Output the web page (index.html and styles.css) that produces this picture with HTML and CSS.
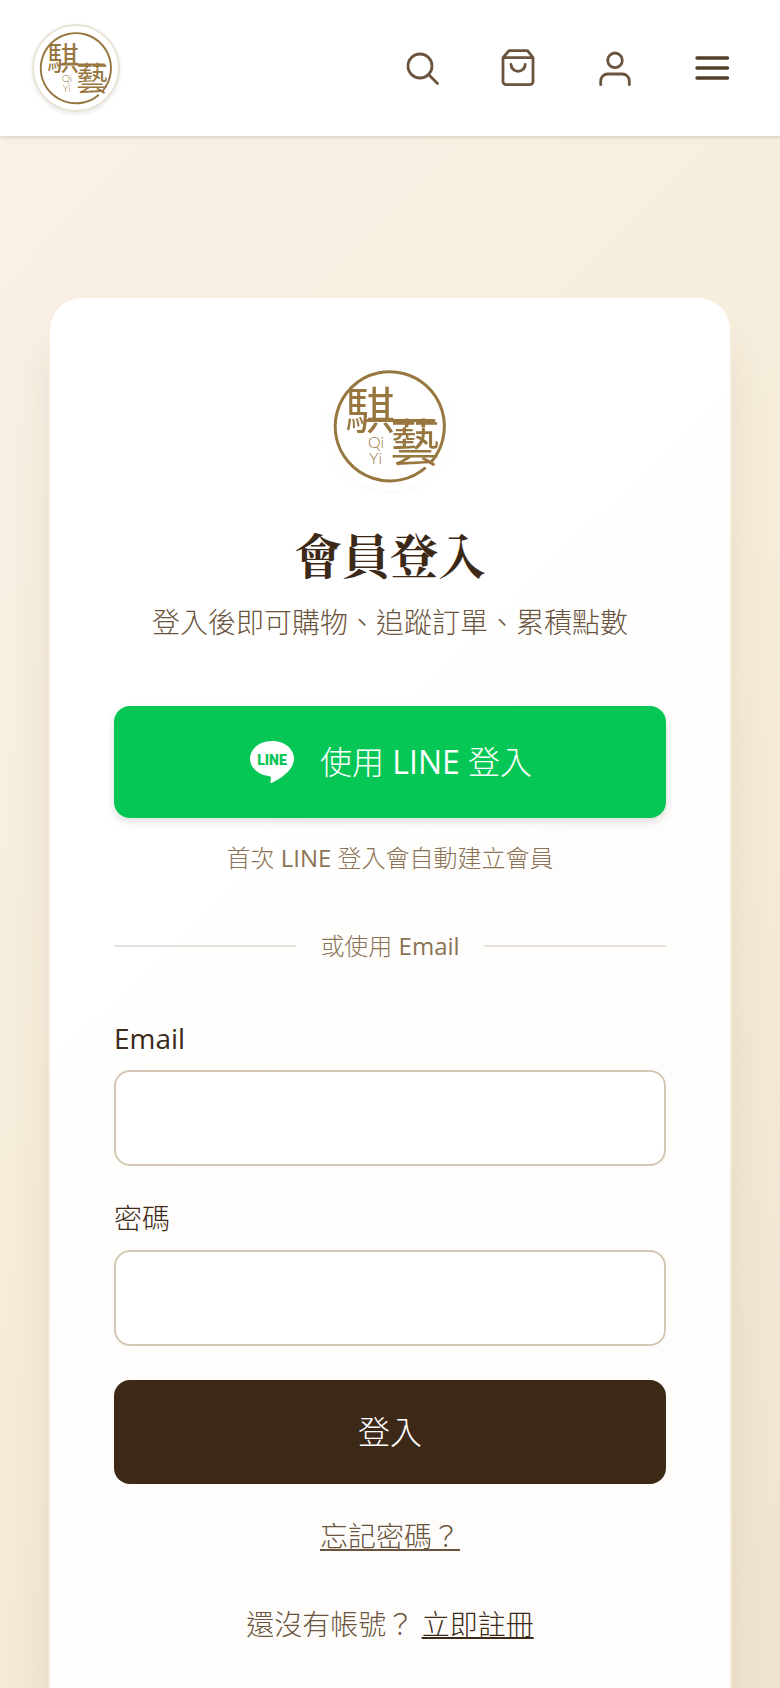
FILE: index.html
```html
<!doctype html>
<html lang="zh-Hant">
<head>
  <meta charset="utf-8">
  <meta name="viewport" content="width=device-width, initial-scale=1">
  <title>會員登入</title>
  <link rel="stylesheet" href="styles.css">
</head>
<body>

<header class="topbar">
  <a class="brand" href="#" aria-label="騏藝">
    <svg class="logo" viewBox="24 20 112 112">
      <path d="M114.700 118.300A54.600 54.600 0 1 1 120.500 112.700M56 70.500H124"/>
      <text x="35" y="79">騏</text>
      <text x="80" y="111">藝</text>
      <text class="latin" x="58" y="98">Qi</text>
      <text class="latin" x="59" y="114">Yi</text>
    </svg>
  </a>
  <nav class="tools">
    <button type="button" aria-label="搜尋">
      <svg viewBox="0 0 40 40"><circle cx="19" cy="18" r="12"/><path d="M27.500 26.500L36.500 35.500"/></svg>
    </button>
    <button type="button" aria-label="購物車">
      <svg viewBox="0 0 40 40"><path d="M11 2.700L5 9.700V33.500a3.200 3.200 0 0 0 3.200 3.200H31.800a3.200 3.200 0 0 0 3.200-3.200V9.700L29.500 2.700ZM5 9.700H35M13 16.300a7.100 7.100 0 0 0 14.200 0"/></svg>
    </button>
    <button type="button" aria-label="會員">
      <svg viewBox="0 0 40 40"><circle cx="20" cy="12.300" r="7.300"/><path d="M5.700 36.700V33a7 7 0 0 1 7-7H27.300a7 7 0 0 1 7 7V36.700"/></svg>
    </button>
    <button type="button" class="menu" aria-label="選單">
      <svg viewBox="0 0 40 40"><path d="M5 10H35.500M5 20H35.500M5 30H35.500"/></svg>
    </button>
  </nav>
</header>

<main>
  <section class="card">
    <div class="card-logo">
      <svg class="logo" viewBox="24 20 112 112">
        <path d="M114.700 118.300A54.600 54.600 0 1 1 120.500 112.700M56 70.500H124"/>
        <text x="35" y="79">騏</text>
        <text x="80" y="111">藝</text>
        <text class="latin" x="58" y="98">Qi</text>
        <text class="latin" x="59" y="114">Yi</text>
      </svg>
    </div>
    <h1>會員登入</h1>
    <p class="lead">登入後即可購物、追蹤訂單、累積點數</p>

    <button type="button" class="btn line-btn">
      <svg viewBox="0 0 48 48" aria-hidden="true">
        <path d="M24 3C11.800 3 2 10.800 2 20.600c0 9.200 8.700 16.600 19.600 17.600 1.300.2 1.500.8 1.300 2.300l-.5 3.200c-.1 1.200.6 1.600 1.800 1C33 40.500 46 31.500 46 20.600 46 10.800 36.200 3 24 3Z"/>
        <text x="24" y="27" text-anchor="middle">LINE</text>
      </svg>
      <span>使用 <b>LINE</b> 登入</span>
    </button>
    <p class="hint">首次 <b>LINE</b> 登入會自動建立會員</p>

    <div class="divider"><span>或使用 <b>Email</b></span></div>

    <form>
      <label for="email"><b>Email</b></label>
      <input type="email" id="email">
      <label for="password">密碼</label>
      <input type="password" id="password">
      <button type="button" class="btn submit">登入</button>
    </form>

    <p class="forgot"><a href="#">忘記密碼？</a></p>
    <p class="signup">還沒有帳號？ <a href="#">立即註冊</a></p>
  </section>
</main>

</body>
</html>
```
FILE: styles.css
```css
*{
  box-sizing: border-box;
}
body{
  margin: 0;
  font-family: "Open Sans", "Noto Sans CJK TC", sans-serif;
  font-size: 28px;
  font-weight: 300;
  line-height: 40px;
  color: #3d2918;
  background: #f5ecdc;
}
h1, p{
  margin: 0;
}
a{
  color: inherit;
}
/* latin words sit a bit heavier than the chinese text */
b{
  font-weight: 400;
}
button, input{
  font: inherit;
}
.logo{
  display: block;
  width: 112px;
  height: 112px;
  overflow: visible;
}
.logo path{
  fill: none;
  stroke: #98763f;
  stroke-width: 3;
  stroke-linecap: round;
}
.logo text{
  font: 400 50px "Noto Sans CJK TC", sans-serif;
  fill: #98763f;
}
.logo .latin{
  font: 300 16px Lato, sans-serif;
}

/* header */
.topbar{
  position: relative;
  display: flex;
  align-items: center;
  justify-content: space-between;
  height: 136px;
  padding: 0 28px 0 32px;
  background: #fff;
  box-shadow: 0 1px 4px rgba(61,41,24,0.2);
}
.brand{
  width: 88px;
  height: 88px;
  padding: 6px;
  border: 2px solid #e9e3d5;
  border-radius: 50%;
  box-shadow: 0 2px 4px rgba(0,0,0,0.1);
}
.brand .logo{
  width: 72px;
  height: 72px;
}
.tools{
  display: flex;
  gap: 17px;
}
.tools button{
  width: 80px;
  height: 80px;
  padding: 20px;
  border: 0;
  background: none;
  color: #6b543d;
}
.tools .menu{
  color: #524029;
}
.tools svg{
  display: block;
  width: 40px;
  height: 40px;
  fill: none;
  stroke: currentColor;
  stroke-width: 2.8;
  stroke-linecap: round;
  stroke-linejoin: round;
}
.tools .menu svg{
  stroke-width: 3.4;
}

/* login card */
main{
  padding: 162px 50px;
  background: linear-gradient(135deg, #f8f1e6 0%, #f5ecd8 50%, #efe2cf 100%);
}
.card{
  padding: 64px 64px 96px;
  border-radius: 32px;
  background: linear-gradient(135deg, #fff 0%, #fff 35%, #fefdfb 50%, #fefdfb 100%);
  box-shadow: 0 0 0 2px rgba(248,238,222,0.8), 0 40px 50px -10px rgba(92,60,30,0.16);
  text-align: center;
}
.card-logo{
  width: 128px;
  height: 128px;
  margin: 0 auto 32px;
  padding: 8px;
  border-radius: 50%;
  box-shadow: 0 4px 6px rgba(0,0,0,0.02);
}
h1{
  font-family: "Noto Serif CJK TC", "Noto Sans CJK TC", serif;
  font-size: 48px;
  font-weight: 700;
  line-height: 64px;
}
.lead{
  margin: 16px 0 64px;
  color: #6b543d;
}
.btn{
  display: flex;
  align-items: center;
  justify-content: center;
  width: 100%;
  border: 0;
  border-radius: 16px;
  color: #fff;
  font-size: 32px;
}
.line-btn{
  gap: 24px;
  height: 112px;
  background: #06c755;
  box-shadow: 0 4px 8px rgba(0,0,0,0.12);
}
.line-btn svg{
  width: 48px;
  height: 48px;
  fill: #fff;
}
.line-btn text{
  font: 900 14px Roboto, sans-serif;
  fill: #06c755;
}
.hint, .divider{
  font-size: 24px;
  color: #8b7355;
}
.hint{
  margin-top: 20px;
}
.divider{
  display: flex;
  align-items: center;
  gap: 24px;
  margin: 48px 0 52px;
}
.divider::before, .divider::after{
  content: "";
  flex: 1;
  height: 2px;
  background: #e5e2dc;
}
form{
  text-align: left;
}
label{
  display: block;
  margin-bottom: 12px;
}
input{
  display: block;
  width: 100%;
  height: 96px;
  margin-bottom: 32px;
  padding: 0 24px;
  border: 2px solid #d4c8b4;
  border-radius: 16px;
  background: #fff;
}
.submit{
  height: 104px;
  margin-top: 34px;
  background: #3d2918;
}
.forgot{
  margin-top: 32px;
  color: #6b543d;
}
.signup{
  margin-top: 48px;
  color: #6b543d;
}
.signup a{
  color: #3d2918;
}
```
